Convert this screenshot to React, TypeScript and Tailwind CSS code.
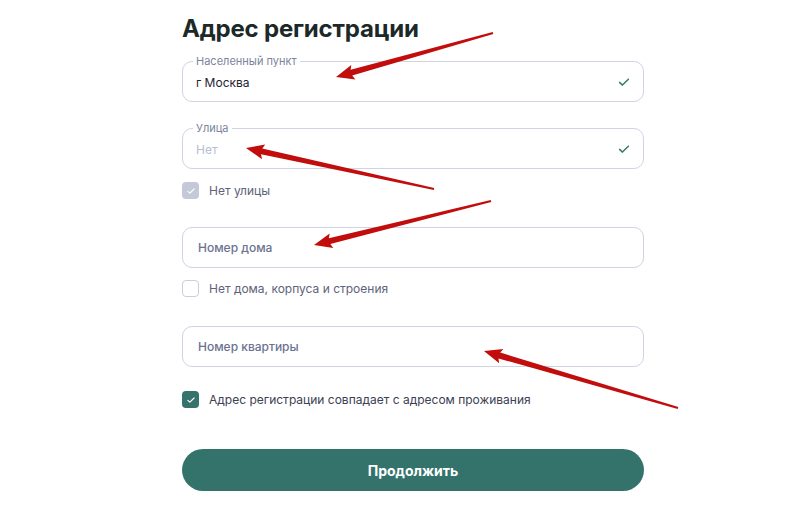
import React from 'react';

type Arrow = { tx: number; ty: number; px: number; py: number };

const arrows: Arrow[] = [
  { tx: 493, ty: 33, px: 336, py: 77 },
  { tx: 434, ty: 189, px: 246, py: 148 },
  { tx: 491, ty: 201, px: 314, py: 245 },
  { tx: 678, ty: 408, px: 484, py: 351 },
];

// tapered red arrow from tail to tip
function arrowPoints(a: Arrow) {
  const dx = a.px - a.tx;
  const dy = a.py - a.ty;
  const len = Math.hypot(dx, dy);
  const ux = dx / len;
  const uy = dy / len;
  const nx = -uy;
  const ny = ux;
  const headLen = 16;
  const headW = 7.5;
  const tailW = 1;
  const neckW = 3;
  const bx = a.px - ux * headLen;
  const by = a.py - uy * headLen;
  const pts = [
    [a.tx + nx * tailW, a.ty + ny * tailW],
    [bx + nx * neckW, by + ny * neckW],
    [bx + nx * headW - ux * 2, by + ny * headW - uy * 2],
    [a.px, a.py],
    [bx - nx * headW - ux * 2, by - ny * headW - uy * 2],
    [bx - nx * neckW, by - ny * neckW],
    [a.tx - nx * tailW, a.ty - ny * tailW],
  ];
  return pts.map((p) => `${p[0].toFixed(1)},${p[1].toFixed(1)}`).join(' ');
}

const Check = ({ className }: { className?: string }) => (
  <svg viewBox="0 0 16 16" className={className} fill="none">
    <path d="M3 8.5l3.2 3L13 4.8" stroke="currentColor" strokeWidth="1.8" strokeLinecap="round" strokeLinejoin="round" />
  </svg>
);

interface FieldProps {
  label?: string;
  value: string;
  valueClass: string;
  checked?: boolean;
}

const Field: React.FC<FieldProps> = ({ label, value, valueClass, checked }) => (
  <div className="relative h-[41px] w-full rounded-[10px] border border-[#cfd4e2] flex items-center pl-[13px] pr-[12px]">
    {label && (
      <span className="absolute left-[10px] -top-[8px] bg-white px-[3px] text-[11px] leading-[14px] text-[#7d849c]">
        {label}
      </span>
    )}
    <span className={`flex-1 text-[12px] ${label ? 'pt-[3px]' : ''} ${valueClass}`}>{value}</span>
    {checked && <Check className="w-[14px] h-[14px] text-[#3d7c72]" />}
  </div>
);

interface BoxProps {
  state: 'disabled' | 'empty' | 'on';
  label: string;
  labelClass: string;
}

const CheckRow: React.FC<BoxProps> = ({ state, label, labelClass }) => {
  const box =
    state === 'disabled'
      ? 'bg-[#c3c9d9] text-white'
      : state === 'on'
      ? 'bg-[#35736c] text-white'
      : 'border border-[#c8cedd] bg-white';
  return (
    <div className="flex items-center gap-[10px] h-[17px]">
      <div className={`w-[17px] h-[17px] rounded-[4px] flex items-center justify-center ${box}`}>
        {state !== 'empty' && <Check className="w-[10px] h-[10px]" />}
      </div>
      <span className={`text-[12px] ${labelClass}`}>{label}</span>
    </div>
  );
};

export default function App() {
  return (
    <div
      className="relative w-[800px] h-[509px] bg-white overflow-hidden"
      style={{ fontFamily: 'Inter, "Noto Sans", sans-serif' }}
    >
      <div className="ml-[182px] w-[462px] pt-[14px] flex flex-col">
        <h1 className="text-[24px] leading-[30px] font-bold text-[#1c2929] tracking-[-0.2px]">
          Адрес регистрации
        </h1>

        <div className="mt-[17px]">
          <Field label="Населенный пункт" value="г Москва" valueClass="text-[#1f2331]" checked />
        </div>

        <div className="mt-[26px]">
          <Field label="Улица" value="Нет" valueClass="text-[#b6bdd0]" checked />
        </div>

        <div className="mt-[13px]">
          <CheckRow state="disabled" label="Нет улицы" labelClass="text-[#5d6379]" />
        </div>

        <div className="mt-[28px]">
          <Field value="Номер дома" valueClass="text-[#6b7290] font-medium pl-[2px]" />
        </div>

        <div className="mt-[12px]">
          <CheckRow state="empty" label="Нет дома, корпуса и строения" labelClass="text-[#5d6379]" />
        </div>

        <div className="mt-[29px]">
          <Field value="Номер квартиры" valueClass="text-[#6b7290] font-medium pl-[2px]" />
        </div>

        <div className="mt-[24px]">
          <CheckRow state="on" label="Адрес регистрации совпадает с адресом проживания" labelClass="text-[#3b4152]" />
        </div>

        <button className="mt-[41px] h-[42px] w-full rounded-full bg-[#33736c] text-white text-[14px] font-bold">
          Продолжить
        </button>
      </div>

      <svg className="absolute inset-0 pointer-events-none" width="800" height="509" viewBox="0 0 800 509">
        {arrows.map((a, i) => (
          <polygon key={i} points={arrowPoints(a)} fill="#c20d0d" />
        ))}
      </svg>
    </div>
  );
}
